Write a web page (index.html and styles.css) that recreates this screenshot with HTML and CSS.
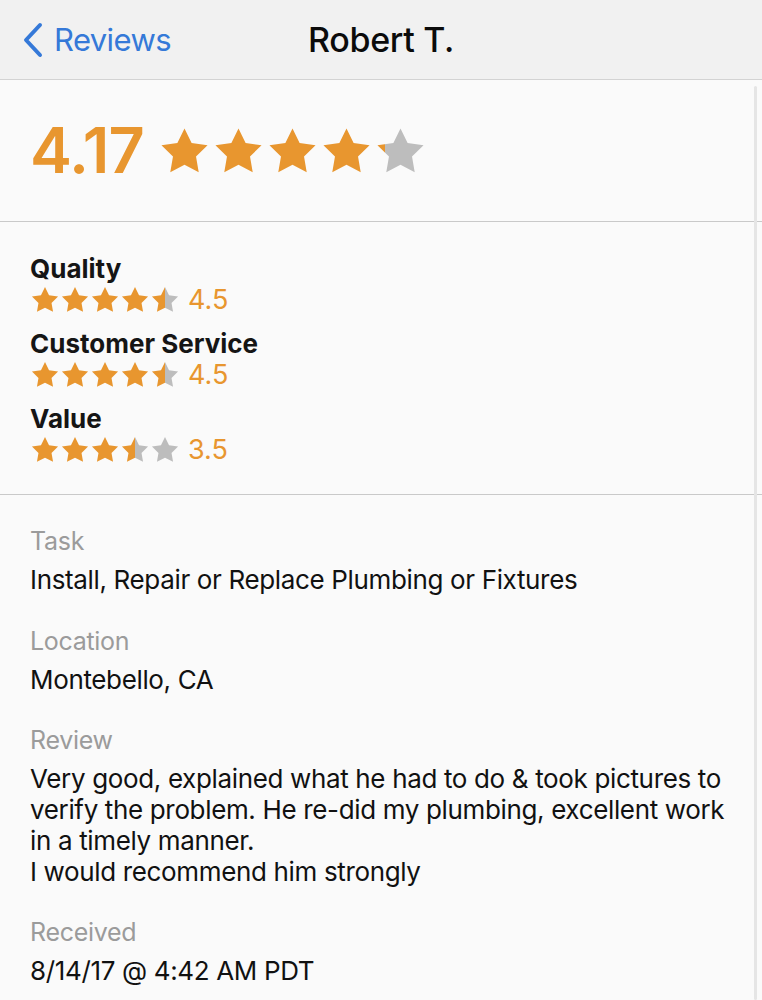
FILE: index.html
```html
<!DOCTYPE html>
<html lang="en">
<head>
<meta charset="utf-8">
<title>Robert T.</title>
<link rel="stylesheet" href="styles.css">
</head>
<body>
<svg class="defs" width="0" height="0" aria-hidden="true">
  <defs>
    <linearGradient id="fill-half" x1="0" x2="1" y1="0" y2="0">
      <stop offset="0.5" stop-color="#E8962F"/>
      <stop offset="0.5" stop-color="#BDBDBD"/>
    </linearGradient>
    <linearGradient id="fill-17" x1="0" x2="1" y1="0" y2="0">
      <stop offset="0.17" stop-color="#E8962F"/>
      <stop offset="0.17" stop-color="#BDBDBD"/>
    </linearGradient>
    <symbol id="star" viewBox="1.2 1.2 21.6 20.8">
      <path d="M12 2.6l2.9 5.9 6.5 0.95-4.7 4.6 1.1 6.45L12 17.45l-5.8 3.05 1.1-6.45-4.7-4.6 6.5-0.95z"/>
    </symbol>
  </defs>
</svg>

<div class="screen">
  <header class="nav">
    <a class="back" href="#">
      <svg class="chevron" viewBox="0 0 22 38" width="22" height="38"><path d="M18 4 L4 19 L18 34"/></svg>
      <span>Reviews</span>
    </a>
    <h1 class="title">Robert T.</h1>
    <span class="nav-spacer"></span>
  </header>

  <section class="overall">
    <span class="overall-score">4.17</span>
    <span class="stars stars-lg">
      <svg class="star on"><use href="#star"/></svg>
      <svg class="star on"><use href="#star"/></svg>
      <svg class="star on"><use href="#star"/></svg>
      <svg class="star on"><use href="#star"/></svg>
      <svg class="star part"><use href="#star"/></svg>
    </span>
  </section>

  <section class="ratings">
    <div class="rating">
      <div class="rating-name">Quality</div>
      <div class="rating-row">
        <span class="stars stars-sm">
          <svg class="star on"><use href="#star"/></svg>
          <svg class="star on"><use href="#star"/></svg>
          <svg class="star on"><use href="#star"/></svg>
          <svg class="star on"><use href="#star"/></svg>
          <svg class="star half"><use href="#star"/></svg>
        </span>
        <span class="rating-value">4.5</span>
      </div>
    </div>
    <div class="rating">
      <div class="rating-name">Customer Service</div>
      <div class="rating-row">
        <span class="stars stars-sm">
          <svg class="star on"><use href="#star"/></svg>
          <svg class="star on"><use href="#star"/></svg>
          <svg class="star on"><use href="#star"/></svg>
          <svg class="star on"><use href="#star"/></svg>
          <svg class="star half"><use href="#star"/></svg>
        </span>
        <span class="rating-value">4.5</span>
      </div>
    </div>
    <div class="rating">
      <div class="rating-name">Value</div>
      <div class="rating-row">
        <span class="stars stars-sm">
          <svg class="star on"><use href="#star"/></svg>
          <svg class="star on"><use href="#star"/></svg>
          <svg class="star on"><use href="#star"/></svg>
          <svg class="star half"><use href="#star"/></svg>
          <svg class="star off"><use href="#star"/></svg>
        </span>
        <span class="rating-value">3.5</span>
      </div>
    </div>
  </section>

  <section class="details">
    <div class="field">
      <div class="field-label">Task</div>
      <div class="field-value">Install, Repair or Replace Plumbing or Fixtures</div>
    </div>
    <div class="field">
      <div class="field-label">Location</div>
      <div class="field-value">Montebello, CA</div>
    </div>
    <div class="field">
      <div class="field-label">Review</div>
      <div class="field-value">Very good, explained what he had to do &amp; took pictures to verify the problem. He re-did my plumbing, excellent work in a timely manner.<br>I would recommend him strongly</div>
    </div>
    <div class="field">
      <div class="field-label">Received</div>
      <div class="field-value">8/14/17 @ 4:42 AM PDT</div>
    </div>
  </section>

  <div class="scroll-indicator"></div>
</div>
</body>
</html>
```

FILE: styles.css
```css
html, body {
  margin: 0;
  padding: 0;
}

body {
  background: #fafafa;
  font-family: Inter, Roboto, "Liberation Sans", sans-serif;
  color: #111;
}

.defs {
  position: absolute;
  width: 0;
  height: 0;
}

.screen {
  position: relative;
  width: 762px;
  height: 1000px;
  overflow: hidden;
  background: #fafafa;
}

/* NAV */
.nav {
  height: 79px;
  background: #f1f1f1;
  border-bottom: 1px solid #d3d3d3;
  display: grid;
  grid-template-columns: 1fr auto 1fr;
  align-items: center;
}

.back {
  display: flex;
  align-items: center;
  gap: 10px;
  padding-left: 22px;
  text-decoration: none;
  color: #3579d8;
  font-size: 31px;
  letter-spacing: -0.6px;
}

.chevron {
  width: 22px;
  height: 38px;
  fill: none;
  stroke: #3579d8;
  stroke-width: 4;
  stroke-linecap: round;
  stroke-linejoin: round;
}

.title {
  margin: 0;
  font-size: 34px;
  font-weight: 500;
  letter-spacing: -0.3px;
  color: #0b0b0b;
}

/* STARS */
.stars {
  display: flex;
  align-items: center;
}

.star {
  display: block;
}

.star.on { fill: #E8962F; }
.star.off { fill: #BDBDBD; }
.star.half { fill: url(#fill-half); }
.star.part { fill: url(#fill-17); }

.stars-lg {
  gap: 1px;
}
.stars-lg .star {
  width: 53px;
  height: 51px;
}

.stars-sm {
  gap: 0;
}
.stars-sm .star {
  width: 30px;
  height: 29px;
}

/* OVERALL */
.overall {
  display: flex;
  align-items: center;
  gap: 14px;
  height: 141px;
  padding: 0 30px;
  border-bottom: 1px solid #c9c9c9;
}

.overall-score {
  font-size: 63px;
  font-weight: 600;
  color: #E8962F;
  letter-spacing: -0.8px;
  line-height: 1;
}

/* RATINGS */
.ratings {
  padding: 31px 30px 29px;
  display: flex;
  flex-direction: column;
  gap: 13px;
  border-bottom: 1px solid #c9c9c9;
}

.rating-name {
  font-size: 26px;
  font-weight: 700;
  line-height: 31px;
  color: #151515;
  letter-spacing: 0;
}

.rating-row {
  display: flex;
  align-items: center;
  gap: 8px;
  height: 31px;
}

.rating-value {
  font-size: 27px;
  color: #E8962F;
  line-height: 31px;
}

/* DETAILS */
.details {
  padding: 31px 30px 0;
  display: flex;
  flex-direction: column;
  gap: 30px;
}

.field-label {
  font-size: 25px;
  line-height: 31px;
  color: #9b9b9b;
  margin-bottom: 8px;
  letter-spacing: -0.3px;
}

.field-value {
  font-size: 26px;
  line-height: 30.7px;
  color: #111;
  letter-spacing: -0.35px;
}

.scroll-indicator {
  position: absolute;
  right: 5px;
  top: 86px;
  bottom: 0;
  width: 3px;
  background: #e5e5e5;
  border-radius: 2px;
}
```
